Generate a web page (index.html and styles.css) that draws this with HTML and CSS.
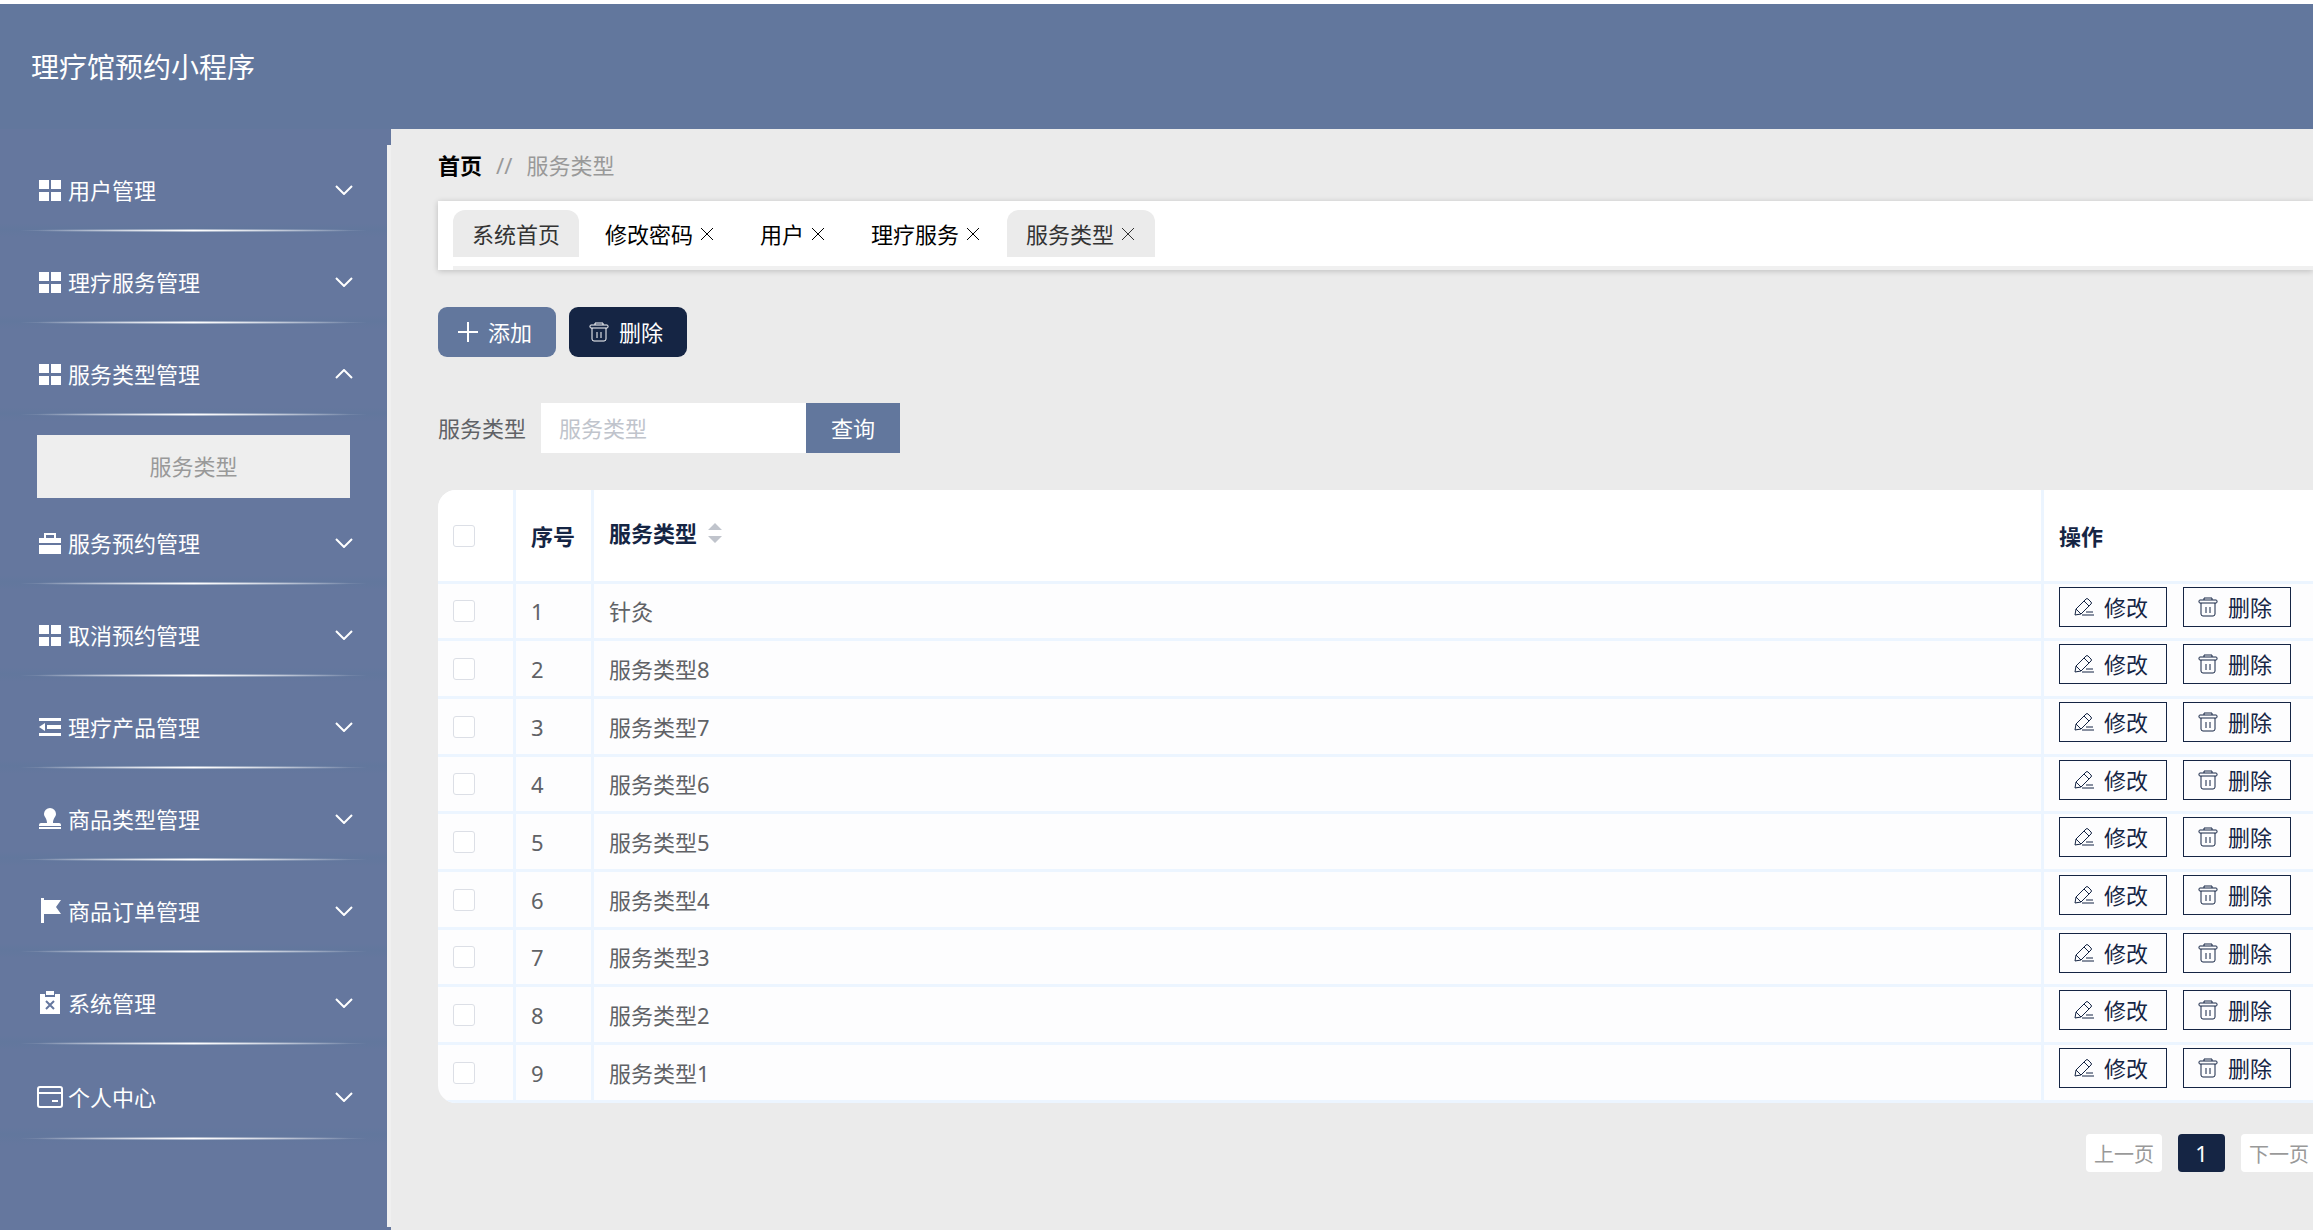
FILE: index.html
```html
<!DOCTYPE html>
<html lang="zh-CN">
<head>
<meta charset="utf-8">
<meta name="viewport" content="width=device-width, initial-scale=1">
<title>理疗馆预约小程序</title>
<link rel="stylesheet" href="styles.css">
</head>
<body>
<svg class="sprite" aria-hidden="true">
  <symbol id="i-grid" viewBox="-2 -2 26 26"><path d="M0 1h10v9H0zM12 1h10v9H12zM0 13h10v9H0zM12 13h10v9H12z"/></symbol>
  <symbol id="i-case" viewBox="-2 -2 26 26"><path d="M0 6h5V1h12v5h5v5H0zM7 6h8V3H7zM0 13h22v9H0z" fill-rule="evenodd"/></symbol>
  <symbol id="i-fold" viewBox="-2 -2 26 26"><path d="M0 2h22v3H0zM8 9h14v4H8zM0 17h22v3H0zM0 11l6-4v8z"/></symbol>
  <symbol id="i-stamp" viewBox="-2 -2 26 26"><path d="M11 0a6 6 0 0 1 6 6c0 3-3 4-3 9h6a2 2 0 0 1 2 2v1H0v-1a2 2 0 0 1 2-2h6c0-5-3-6-3-9a6 6 0 0 1 6-6zM0 19h22v2H0z"/></symbol>
  <symbol id="i-flag" viewBox="-2 0 26 26"><path d="M2 0h3v2h17l-5 7 5 7H5v9H2z"/></symbol>
  <symbol id="i-clip" viewBox="-2 -1 26 26"><path d="M1 3h5v3h10V3h5v20H1z"/><path d="M7 0h8v4H7z"/><path class="cut" d="M7 10l8 8M15 10l-8 8"/></symbol>
  <symbol id="i-card" viewBox="0 -1 26 26"><g class="line2"><rect x="1" y="2" width="24" height="20" rx="2"/><path d="M1 8h24M15 16h6"/></g></symbol>
  <symbol id="i-down" viewBox="0 0 18 10"><path class="line2" d="M1 1l8 8 8-8"/></symbol>
  <symbol id="i-up" viewBox="0 0 18 10"><path class="line2" d="M1 9l8-8 8 8"/></symbol>
  <symbol id="i-x" viewBox="-1 -1 16 16"><path class="line1" d="M1 1l12 12M13 1L1 13"/></symbol>
  <symbol id="i-plus" viewBox="0 0 20 20"><path class="line2" d="M10 0v20M0 10h20"/></symbol>
  <symbol id="i-trash" viewBox="0 0 20 20"><g class="line1"><path d="M6 3V1h8v2"/><rect x="1" y="3" width="18" height="3" rx="1"/><path d="M3 6v11a2 2 0 0 0 2 2h10a2 2 0 0 0 2-2V6M8 10v6M12 10v6"/></g></symbol>
  <symbol id="i-edit" viewBox="0 0 20 20"><g class="line1"><path d="M2 12L12 2q1-1 2 0l3 3q1 1 0 2L7 17l-6 1zM10 4l5 5M2 12l5 5M8 18h12M12 15h7"/></g></symbol>
</svg>

<header class="topbar"><h1 class="topbar-title">理疗馆预约小程序</h1></header>

<div class="layout">
  <aside class="side">
    <nav class="menu">
      <button class="item" type="button"><svg class="ico"><use href="#i-grid"/></svg><span>用户管理</span><svg class="chev"><use href="#i-down"/></svg></button>
      <button class="item" type="button"><svg class="ico"><use href="#i-grid"/></svg><span>理疗服务管理</span><svg class="chev"><use href="#i-down"/></svg></button>
      <button class="item" type="button" aria-expanded="true"><svg class="ico"><use href="#i-grid"/></svg><span>服务类型管理</span><svg class="chev"><use href="#i-up"/></svg></button>
      <a class="sub" href="#">服务类型</a>
      <button class="item" type="button"><svg class="ico"><use href="#i-case"/></svg><span>服务预约管理</span><svg class="chev"><use href="#i-down"/></svg></button>
      <button class="item" type="button"><svg class="ico"><use href="#i-grid"/></svg><span>取消预约管理</span><svg class="chev"><use href="#i-down"/></svg></button>
      <button class="item" type="button"><svg class="ico"><use href="#i-fold"/></svg><span>理疗产品管理</span><svg class="chev"><use href="#i-down"/></svg></button>
      <button class="item" type="button"><svg class="ico"><use href="#i-stamp"/></svg><span>商品类型管理</span><svg class="chev"><use href="#i-down"/></svg></button>
      <button class="item" type="button"><svg class="ico"><use href="#i-flag"/></svg><span>商品订单管理</span><svg class="chev"><use href="#i-down"/></svg></button>
      <button class="item" type="button"><svg class="ico"><use href="#i-clip"/></svg><span>系统管理</span><svg class="chev"><use href="#i-down"/></svg></button>
      <button class="item item-last" type="button"><svg class="ico"><use href="#i-card"/></svg><span>个人中心</span><svg class="chev"><use href="#i-down"/></svg></button>
    </nav>
  </aside>

  <main class="main">
    <nav class="crumbs"><a class="home" href="#">首页</a><span>//</span><span>服务类型</span></nav>

    <div class="tabs">
      <div class="tabs-row">
        <a class="tab on" href="#">系统首页</a>
        <a class="tab" href="#">修改密码<svg class="x"><use href="#i-x"/></svg></a>
        <a class="tab" href="#">用户<svg class="x"><use href="#i-x"/></svg></a>
        <a class="tab" href="#">理疗服务<svg class="x"><use href="#i-x"/></svg></a>
        <a class="tab on" href="#">服务类型<svg class="x"><use href="#i-x"/></svg></a>
      </div>
    </div>

    <div class="actions">
      <button class="btn" type="button"><svg class="bi"><use href="#i-plus"/></svg>添加</button>
      <button class="btn dark" type="button"><svg class="bi"><use href="#i-trash"/></svg>删除</button>
    </div>

    <form class="search">
      <label for="q">服务类型</label>
      <input id="q" type="text" placeholder="服务类型">
      <button type="button">查询</button>
    </form>

    <table class="grid">
      <colgroup><col class="c-check"><col class="c-no"><col><col class="c-ops"></colgroup>
      <thead><tr><th><input type="checkbox" aria-label="全选"></th><th>序号</th><th><span class="sortable">服务类型<svg class="sort" viewBox="0 0 14 20"><path d="M0 7l7-7 7 7zM0 13h14l-7 7z"/></svg></span></th><th>操作</th></tr></thead>
      <tbody id="rows"></tbody>
    </table>

    <nav class="pager">
      <button type="button" class="pg">上一页</button>
      <button type="button" class="pg now">1</button>
      <button type="button" class="pg">下一页</button>
    </nav>
  </main>
</div>
<script src="rows.js"></script>
</body>
</html>
```
FILE: styles.css
```css
* { box-sizing: border-box; }

body {
  margin: 0;
  padding-top: 4px;
  min-height: 100vh;
  display: flex;
  flex-direction: column;
  overflow-x: hidden;
  background: #fff;
  color: #606266;
  font: 400 22px/32px "Noto Sans", "Noto Sans CJK SC", sans-serif;
}

button, input { font: inherit; }
button { border: 0; cursor: pointer; }
a { color: inherit; text-decoration: none; }
svg { fill: currentColor; flex: none; }
.sprite { position: absolute; width: 0; height: 0; }
.line1, .line2 { fill: none; stroke: currentColor; stroke-width: 1; }
.line2 { stroke-width: 2; }
.cut { fill: none; stroke: #65779e; stroke-width: 2; }

.topbar {
  height: 125px;
  padding: 0 31px;
  display: flex;
  align-items: center;
  background: #62779d;
  color: #fff;
}
.topbar-title { margin: 0; font-size: 28px; font-weight: 400; }

.layout { flex: 1; display: flex; }

.side {
  width: 391px;
  flex: none;
  padding: 16px 0 3px;
  background: #65779e;
}
.menu { height: 100%; border-right: 4px solid #f0f0f0; }
.item {
  position: relative;
  width: 100%;
  height: 92px;
  padding: 0 34px 2px 37px;
  display: flex;
  align-items: center;
  gap: 5px;
  background: linear-gradient(transparent 78px, #62779d 84px, transparent);
  color: #fff;
}
.item::after {
  content: "";
  position: absolute;
  left: 20px;
  right: 20px;
  bottom: 5px;
  height: 3px;
  background:
    linear-gradient(90deg, transparent, #fff, transparent) center / 100% 1px no-repeat,
    linear-gradient(90deg, transparent 5%, rgba(255, 255, 255, .5), transparent 95%);
}
.item-last { height: 95px; }
.ico { width: 26px; height: 26px; }
.chev { width: 18px; height: 10px; margin-left: auto; }
.sub {
  display: block;
  margin: 14px 37px 0;
  padding: 15px 0 16px;
  background: #eee;
  color: #999;
  text-align: center;
}

.main {
  flex: 1;
  min-width: 0;
  padding: 20px 0 0 47px;
  background: #ebebeb;
}

.crumbs { display: flex; gap: 14px; color: #999; }
.home { color: #000; font-weight: 700; }

.tabs {
  margin-top: 20px;
  padding: 9px 0 0 15px;
  background: #fff;
  box-shadow: 0 1px 6px rgba(0, 0, 0, .2);
}
.tabs-row { display: flex; gap: 7px; padding-bottom: 9px; border-bottom: 4px solid #f0f0f0; }
.tab {
  height: 47px;
  padding: 0 19px;
  display: flex;
  align-items: center;
  gap: 6px;
  border-radius: 12px 12px 0 0;
  color: #000;
}
.tab.on { background: #ebebeb; color: #333; }
.x { width: 16px; height: 16px; }

.actions { display: flex; gap: 13px; margin-top: 37px; }
.btn {
  width: 118px;
  height: 50px;
  padding: 0 4px 0 0;
  display: flex;
  align-items: center;
  justify-content: center;
  gap: 10px;
  border-radius: 9px;
  background: #62779d;
  color: #fff;
}
.btn.dark { background: #152544; }
.bi { width: 20px; height: 20px; }

.search { display: flex; align-items: center; margin-top: 46px; }
.search label { margin-right: 15px; }
.search input {
  width: 265px;
  height: 50px;
  padding: 0 18px;
  border: 0;
  background: #fff;
}
.search input::placeholder { color: #c0c4cc; opacity: 1; }
.search button { width: 94px; height: 50px; background: #62779d; color: #fff; }

.grid {
  width: 100%;
  margin-top: 37px;
  table-layout: fixed;
  border-collapse: separate;
  border-spacing: 0;
  overflow: hidden;
  border-radius: 18px 0 0 18px;
  background: #fdfdfe;
}
.c-check, .c-no { width: 78px; }
.c-ops { width: 269px; }
.grid th, .grid td {
  padding: 0 15px;
  border: solid #ecf5ff;
  border-width: 0 3px 3px 0;
  text-align: left;
  vertical-align: middle;
}
.grid th:last-child, .grid td:last-child { border-right: 0; }
.grid th { height: 94px; background: #fff; color: #152544; font-weight: 700; }
.grid td { height: 58px; }
.grid tr:nth-child(3n+1) td { height: 57px; }
.grid input {
  appearance: none;
  display: block;
  width: 22px;
  height: 22px;
  margin: 0;
  border: 1px solid #dcdfe6;
  border-radius: 3px;
  background: #fff;
}
.sortable { display: flex; align-items: center; gap: 11px; padding-bottom: 6px; }
.sort { width: 14px; height: 20px; color: #c0c4cc; }
.ops { display: flex; gap: 16px; padding-bottom: 9px; }
.op {
  width: 108px;
  height: 40px;
  padding: 0 4px 0 0;
  display: flex;
  align-items: center;
  justify-content: center;
  gap: 10px;
  border: 1px solid #152544;
  background: transparent;
  color: #152544;
}

.pager { display: flex; justify-content: flex-end; gap: 16px; margin: 31px -4px 0 0; }
.pg {
  width: 76px;
  height: 38px;
  padding: 4px 0 0;
  border-radius: 4px;
  background: #fff;
  color: #999;
  font-size: 20px;
}
.pg.now { width: 47px; padding: 0; background: #152544; color: #fff; font-size: 22px; }
```
FILE: rows.js
```js
const names = ["针灸", "服务类型8", "服务类型7", "服务类型6", "服务类型5", "服务类型4", "服务类型3", "服务类型2", "服务类型1"];
document.getElementById("rows").innerHTML = names.map((name, i) => `
  <tr>
    <td><input type="checkbox" aria-label="选择第${i + 1}行"></td>
    <td>${i + 1}</td>
    <td>${name}</td>
    <td><div class="ops">
      <button class="op" type="button"><svg class="bi"><use href="#i-edit"/></svg>修改</button>
      <button class="op" type="button"><svg class="bi"><use href="#i-trash"/></svg>删除</button>
    </div></td>
  </tr>`).join("");
```
